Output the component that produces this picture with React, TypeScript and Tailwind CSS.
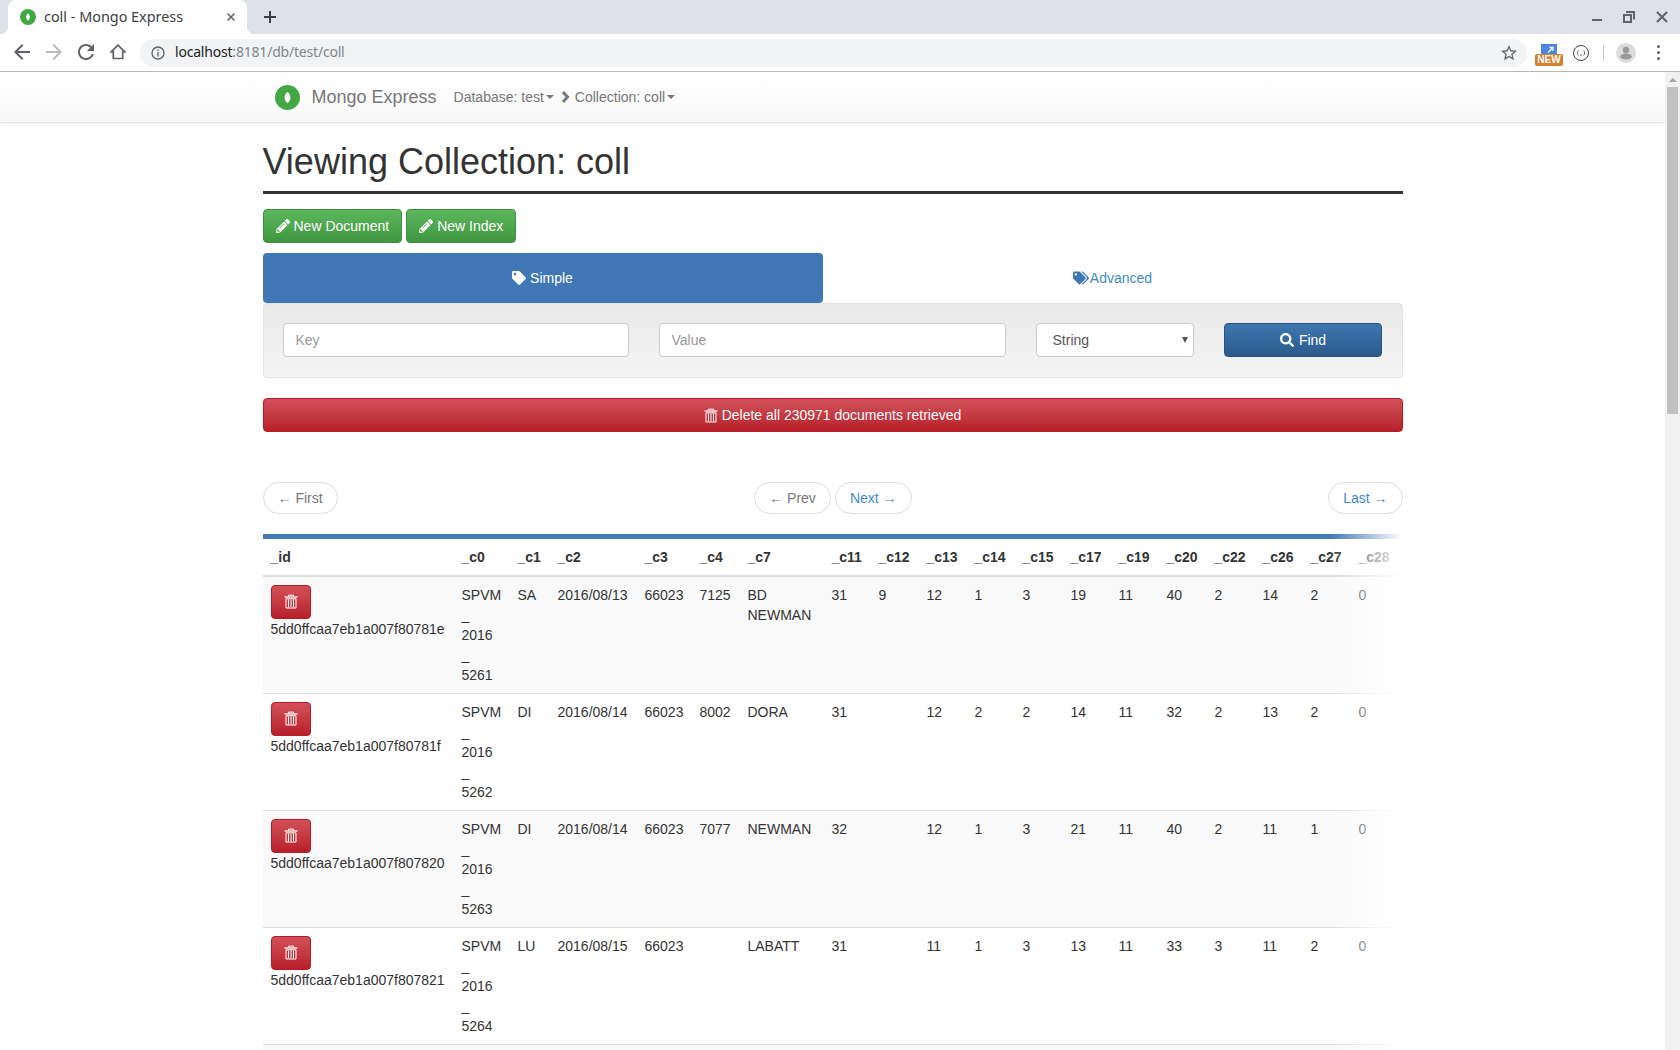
import { FaPencilAlt, FaTag, FaTags, FaSearch } from "react-icons/fa";

const columns = [
  { name: "_c0", width: "w-[56px]" },
  { name: "_c1", width: "w-[40px]" },
  { name: "_c2", width: "w-[87px]" },
  { name: "_c3", width: "w-[55px]" },
  { name: "_c4", width: "w-[48px]" },
  { name: "_c7", width: "w-[84px]" },
  { name: "_c11", width: "w-[47px]" },
  { name: "_c12", width: "w-[48px]" },
  { name: "_c13", width: "w-[48px]" },
  { name: "_c14", width: "w-[48px]" },
  { name: "_c15", width: "w-[48px]" },
  { name: "_c17", width: "w-[48px]" },
  { name: "_c19", width: "w-[48px]" },
  { name: "_c20", width: "w-[48px]" },
  { name: "_c22", width: "w-[48px]" },
  { name: "_c26", width: "w-[48px]" },
  { name: "_c27", width: "w-[48px]" },
  { name: "_c28", width: "w-auto" },
];

const rows = [
  { id: "5dd0ffcaa7eb1a007f80781e", tail: "5261", cells: ["SA", "2016/08/13", "66023", "7125", "BD NEWMAN", "31", "9", "12", "1", "3", "19", "11", "40", "2", "14", "2", "0"] },
  { id: "5dd0ffcaa7eb1a007f80781f", tail: "5262", cells: ["DI", "2016/08/14", "66023", "8002", "DORA", "31", "", "12", "2", "2", "14", "11", "32", "2", "13", "2", "0"] },
  { id: "5dd0ffcaa7eb1a007f807820", tail: "5263", cells: ["DI", "2016/08/14", "66023", "7077", "NEWMAN", "32", "", "12", "1", "3", "21", "11", "40", "2", "11", "1", "0"] },
  { id: "5dd0ffcaa7eb1a007f807821", tail: "5264", cells: ["LU", "2016/08/15", "66023", "", "LABATT", "31", "", "11", "1", "3", "13", "11", "33", "3", "11", "2", "0"] },
];

function Leaf({ size }: { size: number }) {
  return (
    <svg width={size} height={size} viewBox="0 0 24 24" className="shrink-0">
      <circle cx="12" cy="12" r="12" fill="#43a843" />
      <path d="M12 6.500C14 8.500 14.800 10.300 14.800 12S14 15.500 12 17.500C10 15.500 9.200 13.700 9.200 12S10 8.500 12 6.500Z" fill="#fff" />
    </svg>
  );
}

function TrashIcon({ className }: { className?: string }) {
  return (
    <svg viewBox="0 0 14 14" width="14" height="15" className={className} fill="none" stroke="currentColor">
      <path d="M.5 2.500H13.500" strokeWidth="1.300" />
      <path d="M4.500 2V.6H9.500V2" strokeWidth="1" />
      <path d="M2 4.300H12V13.500H2Z" strokeWidth="1" />
      <path d="M4.500 5V12.800M7 5V12.800M9.500 5V12.800" strokeWidth="1" />
    </svg>
  );
}

function Caret() {
  return <span className="ml-[2px] inline-block h-0 w-0 border-x-4 border-t-4 border-x-transparent border-t-[#777] align-middle" />;
}

function ChromeBar() {
  return (
    <div className="shrink-0" style={{ fontFamily: '"Noto Sans", sans-serif' }}>
      <div className="flex h-[34px] items-end bg-[#dee1e6] pl-2">
        <div className="relative flex h-[34px] w-[239px] items-center rounded-t-[8px] bg-white pl-3 pr-[11px]">
          <span className="absolute bottom-0 left-[-8px] h-2 w-2 bg-[radial-gradient(circle_at_0_0,#dee1e6_8px,#fff_8.500px)]" />
          <span className="absolute bottom-0 right-[-8px] h-2 w-2 bg-[radial-gradient(circle_at_100%_0,#dee1e6_8px,#fff_8.500px)]" />
          <Leaf size={16} />
          <span className="ml-2 flex-1 text-[14.400px] leading-none text-[#3c4043]">coll - Mongo Express</span>
          <svg width="10" height="10" viewBox="0 0 10 10" stroke="#5f6368" strokeWidth="1.600">
            <path d="M1.500 1.500L8.500 8.500M8.500 1.500L1.500 8.500" />
          </svg>
        </div>
        <svg width="12" height="12" viewBox="0 0 12 12" className="mb-[11px] ml-[17px]" stroke="#3c4043" strokeWidth="2">
          <path d="M6 0V12M0 6H12" />
        </svg>
        <div className="ml-auto flex items-center self-center pb-[1px]">
          <svg width="10" height="10" viewBox="0 0 10 10" className="mr-[21px] mt-[7px]" fill="#5f6368">
            <rect x="0" y="4" width="10" height="2" />
          </svg>
          <svg width="12" height="12" viewBox="0 0 12 12" className="mr-[21px]" fill="none" stroke="#5f6368" strokeWidth="2">
            <path d="M3 1H11V8.500" />
            <rect x="1" y="4" width="7" height="7" fill="#dee1e6" />
          </svg>
          <svg width="12" height="12" viewBox="0 0 12 12" className="mr-3" stroke="#5f6368" strokeWidth="2">
            <path d="M1 1L11 11M11 1L1 11" />
          </svg>
        </div>
      </div>
      <div className="flex h-[38px] items-center border-b border-[#b7b7b7] bg-white">
        <div className="flex w-[140px] items-center pl-[14px] pb-[1px]">
          <svg width="16" height="16" viewBox="4 4 16 16" fill="#5f6368">
            <path d="M20 11H7.830l5.590-5.590L12 4l-8 8 8 8 1.410-1.410L7.830 13H20v-2z" />
          </svg>
          <svg width="16" height="16" viewBox="4 4 16 16" fill="#b8babc" className="ml-4">
            <path d="M12 4l-1.410 1.410L16.170 11H4v2h12.170l-5.580 5.590L12 20l8-8z" />
          </svg>
          <svg width="16" height="16" viewBox="4 4 16 16" fill="#5f6368" className="ml-4">
            <path d="M17.650 6.350A7.958 7.958 0 0 0 12 4c-4.420 0-7.990 3.580-7.990 8s3.570 8 7.990 8c3.730 0 6.840-2.550 7.730-6h-2.080A5.990 5.990 0 0 1 12 18c-3.310 0-6-2.690-6-6s2.690-6 6-6c1.660 0 3.140.690 4.220 1.780L13 11h7V4l-2.350 2.350z" />
          </svg>
          <svg width="16" height="16" viewBox="0 0 16 16" fill="none" stroke="#5f6368" strokeWidth="1.700" className="ml-4">
            <path d="M8 1.200L1.200 7.800H3.300V14.500H12.700V7.800H14.800Z" />
          </svg>
        </div>
        <div className="flex h-7 w-[1387px] items-center rounded-full bg-[#f1f3f4] pl-[11px] pr-[10px]">
          <svg width="14" height="14" viewBox="0 0 14 14" fill="none" stroke="#5f6368" strokeWidth="1.300">
            <circle cx="7" cy="7" r="6" />
            <path d="M7 6V10.500M7 3.500V5" />
          </svg>
          <span className="ml-[10px] flex-1 pb-[2px] text-[14px] leading-none tracking-[-0.2px] text-[#80868b]">
            <span className="text-[#202124]">localhost</span>:8181/db/test/coll
          </span>
          <svg width="16" height="16" viewBox="2 2 20 20" fill="#5f6368">
            <path d="M22 9.240l-7.190-.620L12 2 9.190 8.630 2 9.240l5.460 4.730L5.820 21 12 17.270 18.180 21l-1.630-7.030L22 9.240zM12 15.400l-3.760 2.270 1-4.280-3.320-2.880 4.380-.380L12 6.100l1.710 4.040 4.380.380-3.320 2.880 1 4.280L12 15.400z" />
          </svg>
        </div>
        <div className="ml-2 mt-[10px] flex w-7 flex-col items-center self-start">
          <svg width="16" height="10" viewBox="0 0 16 10" className="shrink-0">
            <rect width="16" height="10" fill="#4a86e8" />
            <path d="M7 8.500L11 4.500M8.500 3.500H12V7" stroke="#fff" strokeWidth="1.300" fill="none" />
          </svg>
          <span className="h-3 w-7 rounded-[2px] bg-[#d97e2c] text-center text-[10px] font-bold leading-3 text-white" style={{ fontFamily: '"Liberation Sans", sans-serif' }}>
            NEW
          </span>
        </div>
        <svg width="16" height="16" viewBox="0 0 16 16" className="ml-[10px]" fill="none" stroke="#444">
          <circle cx="8" cy="8" r="7.500" />
          <path d="M5.500 5.500C4 6 5.300 7.800 4 8C5.300 8.200 4 10 5.500 10.500M10.500 5.500C12 6 10.700 7.800 12 8C10.700 8.200 12 10 10.500 10.500M7 10H9" strokeWidth="0.800" />
        </svg>
        <span className="ml-[14px] h-4 w-px bg-[#c9cbce]" />
        <svg width="20" height="20" viewBox="0 0 20 20" className="ml-[12px]">
          <circle cx="10" cy="10" r="10" fill="#dcdcdc" />
          <circle cx="10" cy="7" r="3.200" fill="#9a9a9a" />
          <ellipse cx="10" cy="13.500" rx="6" ry="3" fill="#9a9a9a" />
        </svg>
        <span className="ml-[21px] flex flex-col gap-[3px]">
          <span className="h-[3px] w-[3px] rounded-full bg-[#5f6368]" />
          <span className="h-[3px] w-[3px] rounded-full bg-[#5f6368]" />
          <span className="h-[3px] w-[3px] rounded-full bg-[#5f6368]" />
        </span>
      </div>
    </div>
  );
}

function Scrollbar() {
  return (
    <div className="flex w-[15px] shrink-0 flex-col items-center bg-[#f1f1f1]">
      <div className="flex h-[15px] items-center justify-center">
        <span className="h-0 w-0 border-x-4 border-b-4 border-x-transparent border-b-[#a3a3a3]" />
      </div>
      <div className="h-[327px] w-[11px] bg-[#c1c1c1]" />
    </div>
  );
}

function PageLink({ children, disabled }: { children: string; disabled?: boolean }) {
  return (
    <span className={`flex h-8 items-center rounded-[16px] border border-[#ddd] bg-white px-[14px] ${disabled ? "text-[#777]" : "text-[#428bca]"}`}>
      {children}
    </span>
  );
}

export default function App() {
  return (
    <div className="flex h-[1050px] flex-col overflow-hidden bg-white text-[14px] leading-5 text-[#333]" style={{ fontFamily: '"Liberation Sans", Arial, sans-serif' }}>
      <ChromeBar />
      <div className="flex min-h-0 flex-1">
        <div className="min-w-0 flex-1 overflow-hidden">
          <nav className="h-[51px] border-b border-[#e7e7e7] bg-linear-to-b from-white to-[#f8f8f8] shadow-[0_1px_4px_rgba(0,0,0,0.05)]">
            <div className="mx-auto flex h-full w-[1140px] items-center pl-3 text-[#777]">
              <Leaf size={25} />
              <span className="ml-[12px] text-[18px]">Mongo Express</span>
              <span className="ml-[17px]">Database: test</span>
              <Caret />
              <svg width="9" height="12" viewBox="0 0 9 12" className="ml-[7px]" fill="none" stroke="#777" strokeWidth="3">
                <path d="M2 1L6.500 6L2 11" />
              </svg>
              <span className="ml-[5px]">Collection: coll</span>
              <Caret />
            </div>
          </nav>

          <main className="mx-auto w-[1140px]">
            <h1 className="mt-[19px] border-b-[3px] border-[#333] pb-[9px] text-[36px] font-normal leading-10">Viewing Collection: coll</h1>

            <div className="mt-[15px] flex gap-1">
              <button className="flex h-[34px] items-center gap-[4px] rounded-[4px] border border-[#3e8f3e] bg-linear-to-b from-[#5cb85c] to-[#419641] px-3 text-white">
                <FaPencilAlt className="text-[14px]" /> New Document
              </button>
              <button className="flex h-[34px] items-center gap-[4px] rounded-[4px] border border-[#3e8f3e] bg-linear-to-b from-[#5cb85c] to-[#419641] px-3 text-white">
                <FaPencilAlt className="text-[14px]" /> New Index
              </button>
            </div>

            <div className="mt-[10px] flex h-[50px]">
              <div className="flex w-[560px] items-center justify-center gap-[4px] rounded-[4px] bg-[#4078b6] text-white">
                <FaTag className="text-[14px]" /> Simple
              </div>
              <div className="flex flex-1 items-center justify-center gap-[1px] text-[#428bca]">
                <FaTags className="text-[16px] text-[#3f77b5]" />Advanced
              </div>
            </div>

            <div className="grid h-[75px] grid-cols-[346px_347px_158px_158px] items-start gap-x-[30px] rounded-[4px] border border-[#e3e3e3] bg-linear-to-b from-[#e8e8e8] to-[#f5f5f5] px-[19px] pt-[19px]">
              <input placeholder="Key" className="h-[34px] rounded-[4px] border border-[#ccc] bg-white px-3 placeholder:text-[#999]" />
              <input placeholder="Value" className="h-[34px] rounded-[4px] border border-[#ccc] bg-white px-3 placeholder:text-[#999]" />
              <div className="relative">
                <select defaultValue="String" className="h-[34px] w-full appearance-none rounded-[4px] border border-[#ccc] bg-white pl-4 text-[#555]">
                  <option>String</option>
                </select>
                <span className="pointer-events-none absolute right-[6px] top-[14px] h-0 w-0 border-x-[3px] border-t-[6px] border-x-transparent border-t-[#555]" />
              </div>
              <button className="flex h-[34px] items-center justify-center gap-[5px] rounded-[4px] border border-[#245580] bg-linear-to-b from-[#3d77b0] to-[#2c5a8c] pl-[1px] text-white">
                <FaSearch className="text-[14px]" /> Find
              </button>
            </div>

            <button className="mt-5 flex h-[34px] w-full items-center justify-center gap-[4px] rounded-[4px] border border-[#b71c25] bg-linear-to-b from-[#d2505a] to-[#b71e29] text-white">
              <TrashIcon /> Delete all 230971 documents retrieved
            </button>

            <div className="mt-[50px] flex items-center justify-between">
              <PageLink disabled>← First</PageLink>
              <div className="flex gap-1">
                <PageLink disabled>← Prev</PageLink>
                <PageLink>Next →</PageLink>
              </div>
              <PageLink>Last →</PageLink>
            </div>

            <div className="relative mt-5 overflow-hidden">
              <div className="h-[5px] bg-[#417ab7]" />
              <table className="w-full table-fixed border-collapse">
                <thead>
                  <tr className="border-b-2 border-[#ddd]">
                    <th className="w-[191px] p-2 text-left font-bold">_id</th>
                    {columns.map((col) => (
                      <th key={col.name} className={`${col.width} whitespace-nowrap p-2 text-left font-bold`}>{col.name}</th>
                    ))}
                  </tr>
                </thead>
                <tbody>
                  {rows.map((row, i) => (
                    <tr key={row.id} className={`border-b border-[#ddd] ${i % 2 === 0 ? "bg-[#f9f9f9]" : "bg-white"}`}>
                      <td className="p-2 align-top">
                        <button className="flex h-[34px] w-10 items-center justify-center rounded-[4px] border border-[#b71c25] bg-linear-to-b from-[#d2505a] to-[#b71e29] pb-[2px] text-white">
                          <TrashIcon />
                        </button>
                        {row.id}
                      </td>
                      <td className="p-2 align-top">SPVM<br />_<br />2016<br />_<br />{row.tail}</td>
                      {row.cells.map((cell, j) => (
                        <td key={j} className="p-2 align-top">
                          {cell === "BD NEWMAN" ? <>BD<br />NEWMAN</> : cell}
                        </td>
                      ))}
                    </tr>
                  ))}
                  <tr className="h-[117px] bg-[#f9f9f9]"><td colSpan={19} /></tr>
                </tbody>
              </table>
              <div className="absolute inset-y-0 right-0 w-[73px] bg-linear-to-r from-transparent to-white" />
            </div>
          </main>
        </div>
        <Scrollbar />
      </div>
    </div>
  );
}
